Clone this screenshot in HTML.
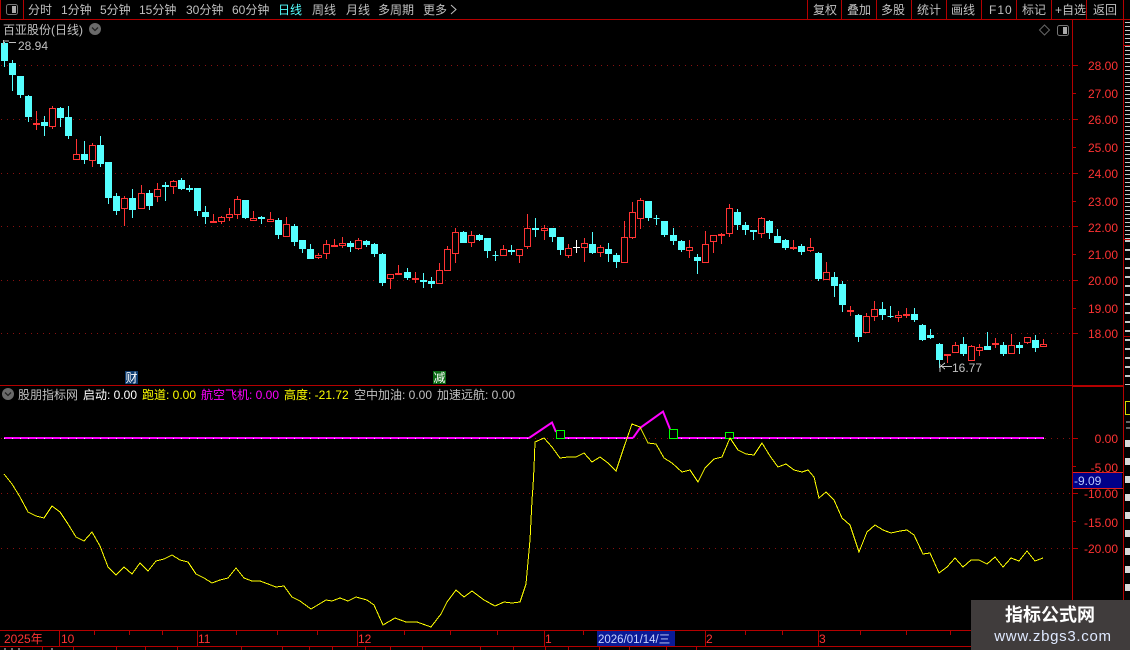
<!DOCTYPE html>
<html><head><meta charset="utf-8"><style>
html,body{margin:0;padding:0;background:#000;width:1130px;height:650px;overflow:hidden}
svg{display:block}
text{font-family:"Liberation Sans","Noto Sans CJK SC",sans-serif;font-size:12px;fill:#c0c0c0;dominant-baseline:auto}
.r{fill:#ff3333;text-anchor:end}
.t{fill:#ff3333}
</style></head><body>
<svg width="1130" height="650" viewBox="0 0 1130 650" xmlns="http://www.w3.org/2000/svg">
<rect width="1130" height="650" fill="#000"/>
<!-- grid -->
<g stroke="#8a1010" stroke-width="1" stroke-dasharray="1 5" shape-rendering="crispEdges" fill="none">
<path d="M1 65.5H1072M1 119.5H1072M1 173.5H1072M1 226.5H1072M1 280.5H1072M1 333.5H1072M1 438.5H1072M1 493.5H1072M1 548.5H1072"/>
</g>
<!-- frame -->
<g stroke="#b40000" stroke-width="1" fill="none" shape-rendering="crispEdges">
<path d="M0 19.5H1130M0.5 0V19M23.5 0V19M807.5 0V19M841.5 0V19M876.5 0V19M911.5 0V19M946.5 0V19M981.5 0V19M1016.5 0V19M1051.5 0V19M1086.5 0V19M1123.5 0V600"/>
<path d="M1072.5 19V630M0 385.5H1123M1073 386.5H1123M1123 45.5H1130M1123 142.5H1130M1123 239.5H1130M1123 336.5H1130"/>
<path d="M1073 65.5h5M1073 93.5h3M1073 119.5h5M1073 147.5h3M1073 173.5h5M1073 201.5h3M1073 226.5h5M1073 254.5h3M1073 280.5h5M1073 308.5h3M1073 333.5h5"/>
<path d="M1073 438.5h5M1073 466.5h3M1073 493.5h5M1073 521.5h3M1073 548.5h5"/>
<path d="M0 630.5H1072M0 646.5H971"/>
<path d="M59.5 631V646M197.5 631V646M357.5 631V646M544.5 631V646M705.5 631V646M818.5 631V646"/>
<path d="M94.5 631v4M129.5 631v4M162.5 631v4M236.5 631v4M277.5 631v4M317.5 631v4M404.5 631v4M450.5 631v4M497.5 631v4M583.5 631v4M745.5 631v4M782.5 631v4M860.5 631v4M906.5 631v4M950.5 631v4"/>
<path d="M42.5 647v3M73.5 647v3M116.5 647v3M145.5 647v3M177.5 647v3M241.5 647v3M282.5 647v3M309.5 647v3M332.5 647v3M365.5 647v3M390.5 647v3M422.5 647v3M480.5 647v3M513.5 647v3M545.5 647v3M568.5 647v3M599.5 647v3M629.5 647v3M666.5 647v3M696.5 647v3"/>
</g>
<!-- right cut-off column -->
<g fill="none" shape-rendering="crispEdges">
<path d="M1127.5 22V240" stroke="#c8c8c8" stroke-width="5" stroke-dasharray="1 3"/>
<path d="M1127.5 240V385" stroke="#c8c8c8" stroke-width="5" stroke-dasharray="2 7"/>
<path d="M1127.5 440V600" stroke="#d8d8d8" stroke-width="5" stroke-dasharray="7 11"/>
<path d="M1125.5 401.5h5v13h-5z" stroke="#d8d800"/>
<path d="M1126 422h4M1126 428h4" stroke="#c8c8c8"/>
</g>
<!-- candles cyan -->
<path shape-rendering="crispEdges" fill="#55ffff" stroke="#55ffff" stroke-width="1" d="
M4.5 42V67M1.5 43.5h6V60.5h-6z
M12.5 60V91M9.5 63.5h6V74.5h-6z
M20.5 76V98M17.5 76.5h6V94.5h-6z
M28.5 95V122M25.5 96.5h6V116.5h-6z
M44.5 116V136M41.5 122.5h6V125.5h-6z
M60.5 107V127M57.5 108.5h6V117.5h-6z
M68.5 106V139M65.5 117.5h6V135.5h-6z
M84.5 141V164M81.5 154.5h6V159.5h-6z
M100.5 136V167M97.5 145.5h6V163.5h-6z
M108.5 162V204M105.5 162.5h6V197.5h-6z
M116.5 193V215M113.5 196.5h6V210.5h-6z
M132.5 189V218M129.5 198.5h6V209.5h-6z
M149.5 190V210M146.5 193.5h6V205.5h-6z
M165.5 182V201M162.5 185.5h6V186.5h-6z
M181.5 178V190M178.5 180.5h6V188.5h-6z
M189.5 185V192M186.5 188.5h6V189.5h-6z
M197.5 188V216M194.5 188.5h6V210.5h-6z
M205.5 206V224M202.5 212.5h6V216.5h-6z
M245.5 200V219M242.5 200.5h6V217.5h-6z
M261.5 216V224M258.5 217.5h6V218.5h-6z
M278.5 218V239M275.5 220.5h6V234.5h-6z
M294.5 224V246M291.5 226.5h6V241.5h-6z
M302.5 240V253M299.5 240.5h6V248.5h-6z
M310.5 244V259M307.5 249.5h6V258.5h-6z
M350.5 241V252M347.5 243.5h6V246.5h-6z
M366.5 240V247M363.5 241.5h6V244.5h-6z
M374.5 243V257M371.5 244.5h6V253.5h-6z
M382.5 253V286M379.5 254.5h6V282.5h-6z
M407.5 268V280M404.5 272.5h6V277.5h-6z
M423.5 273V288M420.5 280.5h6V281.5h-6z
M431.5 277V288M428.5 281.5h6V283.5h-6z
M463.5 231V243M460.5 232.5h6V242.5h-6z
M479.5 234V241M476.5 235.5h6V239.5h-6z
M487.5 238V258M484.5 238.5h6V250.5h-6z
M495.5 251V261M492.5 255.5h6V255.5h-6z
M511.5 245V255M508.5 250.5h6V251.5h-6z
M535.5 218V237M532.5 228.5h6V229.5h-6z
M552.5 228V242M549.5 228.5h6V236.5h-6z
M560.5 237V255M557.5 237.5h6V249.5h-6z
M592.5 232V254M589.5 244.5h6V252.5h-6z
M608.5 243V262M605.5 249.5h6V253.5h-6z
M616.5 253V268M613.5 255.5h6V261.5h-6z
M648.5 201V221M645.5 201.5h6V217.5h-6z
M656.5 215V225M653.5 218.5h6V218.5h-6z
M664.5 221V237M661.5 221.5h6V234.5h-6z
M673.5 228V245M670.5 235.5h6V240.5h-6z
M681.5 240V252M678.5 241.5h6V249.5h-6z
M697.5 254V274M694.5 257.5h6V260.5h-6z
M737.5 209V230M734.5 212.5h6V224.5h-6z
M745.5 222V235M742.5 225.5h6V229.5h-6z
M753.5 230V240M750.5 230.5h6V231.5h-6z
M769.5 220V239M766.5 221.5h6V232.5h-6z
M777.5 229V243M774.5 236.5h6V242.5h-6z
M785.5 239V250M782.5 240.5h6V247.5h-6z
M801.5 244V255M798.5 246.5h6V251.5h-6z
M818.5 252V281M815.5 253.5h6V278.5h-6z
M834.5 272V297M831.5 277.5h6V285.5h-6z
M842.5 281V312M839.5 284.5h6V304.5h-6z
M858.5 314V342M855.5 315.5h6V336.5h-6z
M882.5 302V320M879.5 309.5h6V314.5h-6z
M890.5 306V318M887.5 316.5h6V316.5h-6z
M914.5 308V322M911.5 314.5h6V319.5h-6z
M922.5 324V341M919.5 325.5h6V339.5h-6z
M930.5 329V339M927.5 335.5h6V337.5h-6z
M939.5 343V368M936.5 344.5h6V359.5h-6z
M963.5 337V356M960.5 344.5h6V353.5h-6z
M987.5 332V350M984.5 346.5h6V349.5h-6z
M1003.5 342V356M1000.5 345.5h6V353.5h-6z
M1019.5 342V354M1016.5 345.5h6V347.5h-6z
M1035.5 335V352M1032.5 340.5h6V347.5h-6z"/>
<!-- candles red -->
<path shape-rendering="crispEdges" fill="none" stroke="#ff3333" stroke-width="1" d="
M36.5 111V130M33.5 123.5h6V124.5h-6z
M52.5 106V108M52.5 127V129M49.5 108.5h6V126.5h-6z
M76.5 139V154M73.5 154.5h6V159.5h-6z
M92.5 143V145M92.5 161V167M89.5 145.5h6V160.5h-6z
M124.5 196V198M124.5 209V226M121.5 198.5h6V208.5h-6z
M141.5 185V193M138.5 193.5h6V208.5h-6z
M157.5 183V189M157.5 197V202M154.5 189.5h6V196.5h-6z
M173.5 180V181M173.5 187V194M170.5 181.5h6V186.5h-6z
M213.5 214V223M210.5 221.5h6V222.5h-6z
M221.5 216V217M221.5 222V224M218.5 217.5h6V221.5h-6z
M229.5 208V214M229.5 218V221M226.5 214.5h6V217.5h-6z
M237.5 196V199M237.5 215V219M234.5 199.5h6V214.5h-6z
M253.5 211V218M250.5 218.5h6V220.5h-6z
M270.5 212V219M267.5 219.5h6V221.5h-6z
M286.5 217V224M283.5 224.5h6V236.5h-6z
M318.5 253V255M318.5 258V259M315.5 255.5h6V257.5h-6z
M326.5 240V244M326.5 254V259M323.5 244.5h6V253.5h-6z
M334.5 239V247M331.5 245.5h6V246.5h-6z
M342.5 237V243M342.5 246V248M339.5 243.5h6V245.5h-6z
M358.5 238V240M358.5 249V250M355.5 240.5h6V248.5h-6z
M390.5 279V289M387.5 274.5h6V278.5h-6z
M398.5 265V275M395.5 273.5h6V274.5h-6z
M415.5 272V283M412.5 278.5h6V279.5h-6z
M439.5 263V270M436.5 270.5h6V283.5h-6z
M447.5 246V249M444.5 249.5h6V270.5h-6z
M455.5 228V232M455.5 254V263M452.5 232.5h6V253.5h-6z
M471.5 231V235M471.5 243V247M468.5 235.5h6V242.5h-6z
M503.5 245V249M500.5 249.5h6V255.5h-6z
M519.5 256V263M516.5 249.5h6V255.5h-6z
M527.5 214V228M527.5 247V249M524.5 228.5h6V246.5h-6z
M544.5 225V228M544.5 231V240M541.5 228.5h6V230.5h-6z
M568.5 244V248M568.5 256V258M565.5 248.5h6V255.5h-6z
M584.5 238V243M584.5 248V262M581.5 243.5h6V247.5h-6z
M600.5 245V247M600.5 253V257M597.5 247.5h6V252.5h-6z
M624.5 221V237M621.5 237.5h6V262.5h-6z
M632.5 202V212M632.5 238V239M629.5 212.5h6V237.5h-6z
M640.5 198V200M640.5 219V229M637.5 200.5h6V218.5h-6z
M689.5 240V247M689.5 251V258M686.5 247.5h6V250.5h-6z
M705.5 231V244M702.5 244.5h6V262.5h-6z
M713.5 242V253M710.5 235.5h6V241.5h-6z
M721.5 233V244M718.5 234.5h6V235.5h-6z
M729.5 204V208M729.5 234V237M726.5 208.5h6V233.5h-6z
M761.5 217V218M761.5 234V238M758.5 218.5h6V233.5h-6z
M793.5 240V250M790.5 247.5h6V248.5h-6z
M810.5 238V247M810.5 251V252M807.5 247.5h6V250.5h-6z
M826.5 262V272M823.5 272.5h6V279.5h-6z
M850.5 306V316M847.5 310.5h6V311.5h-6z
M866.5 313V316M863.5 316.5h6V332.5h-6z
M874.5 301V309M874.5 317V321M871.5 309.5h6V316.5h-6z
M898.5 311V315M898.5 318V322M895.5 315.5h6V317.5h-6z
M906.5 308V318M903.5 314.5h6V315.5h-6z
M947.5 356V363M944.5 354.5h6V355.5h-6z
M955.5 342V345M952.5 345.5h6V352.5h-6z
M971.5 345V346M968.5 346.5h6V360.5h-6z
M979.5 344V347M979.5 351V356M976.5 347.5h6V350.5h-6z
M995.5 338V348M992.5 343.5h6V344.5h-6z
M1011.5 334V345M1008.5 345.5h6V353.5h-6z
M1027.5 343V344M1024.5 337.5h6V342.5h-6z
M1043.5 339V344M1040.5 344.5h6V346.5h-6z"/>
<!-- white doji -->
<path shape-rendering="crispEdges" fill="none" stroke="#ffffff" d="M576.5 240V253M573 247.5h7"/>
<!-- indicator: magenta -->
<g shape-rendering="crispEdges" fill="none">
<path stroke="#ff00ff" stroke-width="2" d="M4 438H529M564 438H633M677 438H725M733 438H1044"/>
<path stroke="#ff00ff" stroke-width="2" shape-rendering="auto" d="M529 438L552 422.5L556 432M633 438L640 428L663 411.5L670 429"/>
<path stroke="#eeeeee" stroke-width="1" stroke-dasharray="1 7" d="M4 438.5H133M141 438.5H262M270 438.5H399M407 438.5H528M568 438.5H632M681 438.5H802M810 438.5H931M939 438.5H1044"/>
<path stroke="#00ff00" stroke-width="1" d="M556.5 430.5h8v8h-8zM669.5 429.5h8v9h-8zM725.5 432.5h8v6h-8z"/>
<path stroke="#ffff00" stroke-width="1" d="M4 474L12 484L20 497L28 512L36 516L44 518L52 506L60 512L68 524L76 537L84 541L92 532L100 546L108 567L116 575L124 567L132 574L140 563L148 571L156 561L164 559L172 555L180 560L188 562L196 574L204 578L212 583L220 580L228 578L236 568L244 578L252 581L260 581L268 584L276 587L284 586L292 597L300 601L311 609L326 600L332 601L340 598L348 601L356 597L367 600L374 605L383 625L395 618L406 622L417 622L431 627L441 614L447 602L456 590L464 597L472 591L484 600L495 606L504 602L512 603L520 602L526 584L530 540L532 500L533 487L534 468L535 442L544 438L552 447L560 458L568 457L576 457L584 453L592 462L600 457L608 463L616 471L624 447L632 424L640 427L648 443L656 444L664 458L672 463L682 472L690 470L698 482L705 468L714 459L722 457L730 438L738 450L746 454L754 455L762 443L770 456L778 467L786 464L794 470L802 472L808 470L814 477L819 498L826 492L834 500L842 518L850 525L859 552L867 532L875 525L883 530L891 533L900 531L907 530L914 535L923 554L930 553L939 573L947 567L955 558L963 567L971 560L979 560L987 564L995 557L1003 567L1011 558L1019 561L1027 551L1035 561L1043 558"/>
<path stroke="#c0c0c0" d="M3.5 40V45M4 41h5M9 42.5h7M940 366.5h12M940 364V372M941 366l4-3M941 366l4 3"/>
</g>
<!-- top bar -->
<g>
<rect x="6.500" y="4.500" width="11" height="10" rx="2" fill="none" stroke="#777"/><rect x="12" y="6" width="4" height="7" fill="#aaa"/>
<text x="28" y="14">分时</text><text x="61" y="14">1分钟</text><text x="100" y="14">5分钟</text><text x="139" y="14">15分钟</text><text x="186" y="14">30分钟</text><text x="232" y="14">60分钟</text>
<text x="278" y="14" style="fill:#55ffff">日线</text><text x="312" y="14">周线</text><text x="346" y="14">月线</text><text x="378" y="14">多周期</text><text x="423" y="14">更多</text>
<path d="M451 5l5 4.500l-5 4.500" fill="none" stroke="#c0c0c0"/>
<text x="813" y="14">复权</text><text x="847" y="14">叠加</text><text x="881" y="14">多股</text><text x="917" y="14">统计</text><text x="951" y="14">画线</text><text x="989" y="14" style="letter-spacing:1px">F10</text><text x="1022" y="14">标记</text><text x="1055" y="14">+自选</text><text x="1093" y="14">返回</text>
</g>
<!-- title -->
<text x="3" y="34">百亚股份(日线)</text>
<circle cx="95" cy="29" r="6" fill="#6a6a6a"/><path d="M92 27.500l3 3l3-3" fill="none" stroke="#222" stroke-width="1.300"/>
<path d="M1044.500 25l5 5l-5 5l-5-5z" fill="none" stroke="#666"/>
<rect x="1057.500" y="25.500" width="11" height="10" rx="2" fill="none" stroke="#777"/><rect x="1063" y="27" width="4" height="7" fill="#aaa"/>
<text x="18" y="50">28.94</text>
<text x="952" y="372">16.77</text>
<!-- price axis -->
<g>
<text class="r" x="1118" y="70">28.00</text><text class="r" x="1118" y="98">27.00</text><text class="r" x="1118" y="124">26.00</text><text class="r" x="1118" y="152">25.00</text><text class="r" x="1118" y="178">24.00</text><text class="r" x="1118" y="206">23.00</text><text class="r" x="1118" y="232">22.00</text><text class="r" x="1118" y="259">21.00</text><text class="r" x="1118" y="285">20.00</text><text class="r" x="1118" y="313">19.00</text><text class="r" x="1118" y="338">18.00</text>
<text class="r" x="1118" y="443">0.00</text><text class="r" x="1118" y="472">-5.00</text><text class="r" x="1118" y="498">-10.00</text><text class="r" x="1118" y="527">-15.00</text><text class="r" x="1118" y="553">-20.00</text>
</g>
<g shape-rendering="crispEdges"><rect x="1073" y="473" width="49" height="15" fill="#000088"/><path d="M1073 472.500h50M1073 488.500h50" stroke="#e02020"/></g>
<text x="1074" y="485" style="fill:#b8c8ff">-9.09</text>
<!-- badges -->
<rect x="125" y="371" width="13" height="13" fill="#0f3d70"/><text x="125.500" y="382" style="fill:#fff">财</text>
<rect x="433" y="371" width="13" height="13" fill="#0a6a14"/><text x="433.500" y="382" style="fill:#fff">减</text>
<!-- indicator title -->
<circle cx="8" cy="394" r="6" fill="#6a6a6a"/><path d="M5 392.500l3 3l3-3" fill="none" stroke="#222" stroke-width="1.300"/>
<text x="18" y="399">股朋指标网</text>
<text x="83" y="399" style="fill:#fff">启动: 0.00</text>
<text x="142" y="399" style="fill:#ffff00">跑道: 0.00</text>
<text x="201" y="399" style="fill:#ff00ff">航空飞机: 0.00</text>
<text x="284" y="399" style="fill:#ffff00">高度: -21.72</text>
<text x="354" y="399">空中加油: 0.00</text>
<text x="437" y="399">加速远航: 0.00</text>
<!-- time axis -->
<text class="t" x="4" y="643">2025年</text><text class="t" x="61" y="643">10</text><text class="t" x="198" y="643">11</text><text class="t" x="358" y="643">12</text><text class="t" x="545" y="643">1</text><text class="t" x="706" y="643">2</text><text class="t" x="819" y="643">3</text>
<rect x="597" y="631" width="78" height="15" fill="#0a1a96"/>
<text x="598" y="643" style="fill:#c8d4ff;font-size:11.500px">2026/01/14/三</text>
<path d="M5 650v-2M12 650v-2M19 650v-2M52 650v-2" stroke="#ddd" fill="none"/>
<!-- watermark -->
<rect x="971" y="600" width="159" height="50" fill="#403c3c"/>
<text x="1050" y="621" text-anchor="middle" style="fill:#fff;font-size:18px;font-weight:bold">指标公式网</text>
<text x="1053" y="641" text-anchor="middle" style="fill:#dfe9ff;font-size:15px;letter-spacing:.7px">www.zbgs3.com</text>
</svg>
</body></html>
